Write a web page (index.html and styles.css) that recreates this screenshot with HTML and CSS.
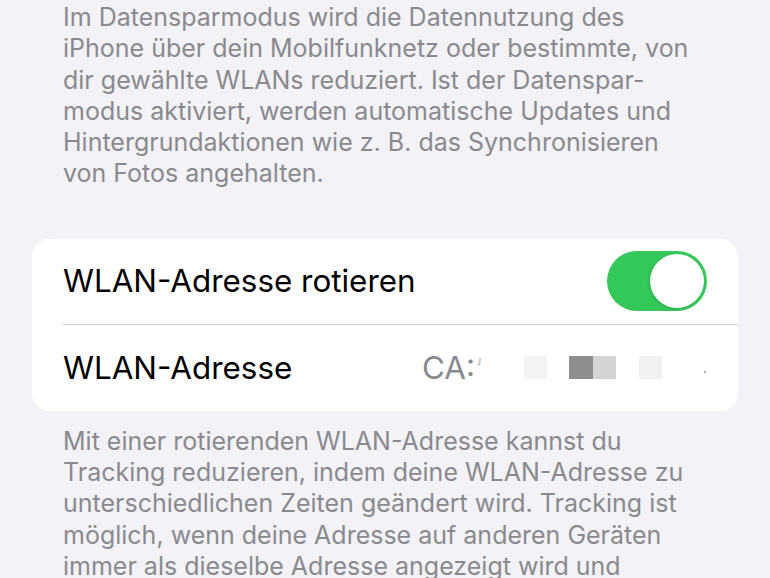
FILE: index.html
```html
<!DOCTYPE html>
<html lang="de">
<head>
<meta charset="utf-8">
<link rel="stylesheet" href="styles.css">
</head>
<body>
<div class="screen">
  <p class="note note-top">Im Datensparmodus wird die Datennutzung des<br>iPhone über dein Mobilfunknetz oder bestimmte, von<br>dir gewählte WLANs reduziert. Ist der Datenspar-<br>modus aktiviert, werden automatische Updates und<br>Hintergrundaktionen wie z. B. das Synchronisieren<br>von Fotos angehalten.</p>

  <div class="card">
    <div class="row row-first">
      <span class="label">WLAN-Adresse rotieren</span>
      <span class="toggle"><span class="knob"></span></span>
    </div>
    <div class="row row-second">
      <span class="label">WLAN-Adresse</span>
      <span class="value">
        <span class="mac">CA:<span class="ghost">‘</span></span>
        <span class="px px-a"></span>
        <span class="px-pair"><span class="px px-dark"></span><span class="px px-mid"></span></span>
        <span class="px px-b"></span>
        <span class="dot"></span>
      </span>
    </div>
  </div>

  <p class="note note-bottom">Mit einer rotierenden WLAN-Adresse kannst du<br>Tracking reduzieren, indem deine WLAN-Adresse zu<br>unterschiedlichen Zeiten geändert wird. Tracking ist<br>möglich, wenn deine Adresse auf anderen Geräten<br>immer als dieselbe Adresse angezeigt wird und</p>
</div>
</body>
</html>
```

FILE: styles.css
```css
html, body {
  margin: 0;
  padding: 0;
  background: #f2f2f7;
}

.screen {
  width: 770px;
  height: 578px;
  overflow: hidden;
  font-family: "Inter", "Liberation Sans", sans-serif;
  background: #f2f2f7;
}

.note {
  margin: 0;
  padding: 0 0 0 63px;
  color: #8a8a8e;
  font-size: 25px;
  line-height: 31.3px;
  white-space: nowrap;
}

.note-top {
  padding-top: 2px;
}

.card {
  margin: 49px 32px 0 32px;
  background: #ffffff;
  border-radius: 18px;
  overflow: hidden;
}

.row {
  display: flex;
  align-items: center;
  justify-content: space-between;
  margin-left: 31px;
  padding-right: 31px;
  color: #000;
  font-size: 31.4px;
}

.row-first {
  height: 85px;
  border-bottom: 1px solid #d1d1d6;
}

.row-second {
  height: 86px;
}

.toggle {
  display: flex;
  align-items: center;
  justify-content: flex-end;
  width: 100px;
  height: 60px;
  box-sizing: border-box;
  padding-right: 3px;
  border-radius: 30px;
  background: #34c759;
}

.knob {
  width: 54px;
  height: 54px;
  border-radius: 50%;
  background: #fff;
  box-shadow: -1px 1px 3px rgba(0, 0, 0, 0.12);
}

.value {
  display: flex;
  align-items: center;
  color: #8a8a8e;
  width: 285px;
  height: 40px;
}

.mac {
  width: 102px;
  white-space: nowrap;
}

.ghost {
  color: #d0d0d2;
  font-size: 28px;
}

.px {
  display: block;
  width: 23px;
  height: 23px;
}

.px-a {
  background: #f3f3f3;
  margin-right: 22px;
}

.px-pair {
  display: flex;
  margin-right: 23px;
}

.px-dark {
  width: 24px;
  background: #8e8e8e;
}

.px-mid {
  background: #d4d4d4;
}

.px-b {
  background: #f2f2f2;
}

.dot {
  display: block;
  width: 2px;
  height: 2px;
  margin-left: 42px;
  margin-top: 8px;
  background: #b0b0b0;
}

.note-bottom {
  padding-top: 15px;
}
```
